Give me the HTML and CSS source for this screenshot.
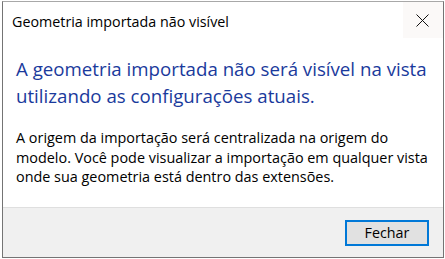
FILE: index.html
```html
<!DOCTYPE html>
<html lang="pt">
<head>
<meta charset="utf-8">
<link rel="stylesheet" href="styles.css">
</head>
<body>
<div class="window">
  <div class="titlebar">
    <div class="title">Geometria importada não visível</div>
    <div class="close">
      <svg width="13" height="13" viewBox="0 0 13 13"><path d="M0.5 0.5 L12.5 12.5 M12.5 0.5 L0.5 12.5" stroke="#111" stroke-width="1" fill="none"/></svg>
    </div>
  </div>
  <div class="content">
    <div class="heading">A geometria importada não será visível na vista utilizando as configurações atuais.</div>
    <div class="body">A origem da importação será centralizada na origem do modelo. Você pode visualizar a importação em qualquer vista onde sua geometria está dentro das extensões.</div>
  </div>
  <div class="footer">
    <button class="btn">Fechar</button>
  </div>
</div>
</body>
</html>
```
FILE: styles.css
```css
html, body {
  margin: 0;
  padding: 0;
  background: #ffffff;
}
body {
  width: 445px;
  height: 259px;
  font-family: "Open Sans", "Noto Sans", sans-serif;
}
.window {
  box-sizing: border-box;
  margin: 1px 1px 0 2px;
  width: 442px;
  height: 257px;
  border: 1px solid #747474;
  border-top-color: #a8a8a8;
  display: flex;
  flex-direction: column;
  background: #fff;
}
.titlebar {
  height: 36px;
  display: flex;
  align-items: stretch;
  justify-content: space-between;
}
.title {
  padding: 10px 0 0 9px;
  font-size: 14.3px;
  line-height: 19px;
  color: #000;
}
.close {
  width: 38px;
  background: #fbf9f8;
  display: flex;
  align-items: center;
  justify-content: center;
  padding-right: 2px;
}
.content {
  flex: 1;
  padding: 17px 4px 0 13px;
}
.heading {
  font-size: 18.7px;
  line-height: 27px;
  color: #1a3a9c;
  margin-bottom: 19px;
}
.body {
  font-size: 14.4px;
  line-height: 19.5px;
  color: #000;
}
.footer {
  height: 50px;
  border-top: 1px solid #dfdfdf;
  background: #f0f0f0;
  display: flex;
  justify-content: flex-end;
  align-items: flex-start;
  padding: 12px 14px 0 0;
  box-sizing: border-box;
}
.btn {
  width: 84px;
  height: 26px;
  box-sizing: border-box;
  border: 2px solid #0078d7;
  background: #e1e1e1;
  font-family: "Open Sans", "Noto Sans", sans-serif;
  font-size: 14.3px;
  line-height: 20px;
  color: #000;
  padding: 0;
}
```
